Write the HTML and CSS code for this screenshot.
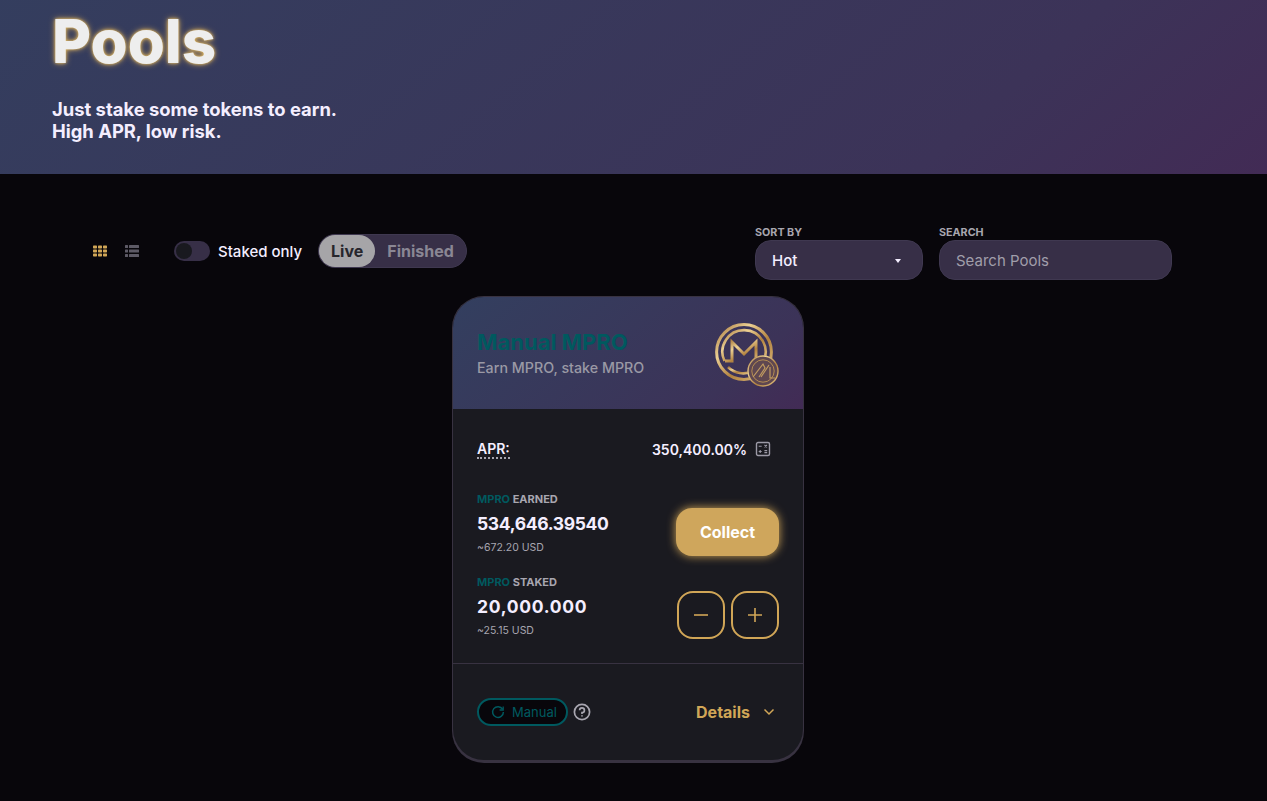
FILE: index.html
```html
<!DOCTYPE html>
<html lang="en">
<head>
<meta charset="utf-8">
<title>Pools</title>
<link rel="stylesheet" href="styles.css">
</head>
<body>
<header class="hero">
  <h1 class="hero-title">Pools</h1>
  <p class="hero-sub">Just stake some tokens to earn.<br>High APR, low risk.</p>
</header>
<main class="page">
  <div class="toolbar">
    <div class="view-icons">
      <svg class="view-icon" width="16" height="16" viewBox="0 0 16 16" fill="#d1a657"><rect x="1" y="2.5" width="4" height="3" rx=".7"/><rect x="6" y="2.5" width="4" height="3" rx=".7"/><rect x="11" y="2.5" width="4" height="3" rx=".7"/><rect x="1" y="6.5" width="4" height="3" rx=".7"/><rect x="6" y="6.5" width="4" height="3" rx=".7"/><rect x="11" y="6.5" width="4" height="3" rx=".7"/><rect x="1" y="10.5" width="4" height="3" rx=".7"/><rect x="6" y="10.5" width="4" height="3" rx=".7"/><rect x="11" y="10.5" width="4" height="3" rx=".7"/></svg>
      <svg class="view-icon" width="16" height="16" viewBox="0 0 16 16" fill="#5d5a66"><rect x="1" y="2" width="3" height="3" rx=".5"/><rect x="5" y="2" width="10" height="3" rx=".5"/><rect x="1" y="6.5" width="3" height="3" rx=".5"/><rect x="5" y="6.5" width="10" height="3" rx=".5"/><rect x="1" y="11" width="3" height="3" rx=".5"/><rect x="5" y="11" width="10" height="3" rx=".5"/></svg>
    </div>
    <div class="toggle"><span class="knob"></span></div>
    <span class="toggle-label">Staked only</span>
    <div class="tabs">
      <span class="tab tab-active">Live</span>
      <span class="tab tab-idle">Finished</span>
    </div>
    <div class="filters">
      <div class="filter">
        <span class="filter-label">SORT BY</span>
        <div class="select"><span>Hot</span><span class="caret"></span></div>
      </div>
      <div class="filter">
        <span class="filter-label">SEARCH</span>
        <div class="search">Search Pools</div>
      </div>
    </div>
  </div>

  <section class="cards">
    <article class="card">
      <div class="card-inner">
        <div class="card-head">
          <div class="card-heading">
            <h2 class="card-title">Manual MPRO</h2>
            <p class="card-sub">Earn MPRO, stake MPRO</p>
          </div>
          <svg class="coin" width="64" height="64" viewBox="0 0 64 64" fill="none">
            <defs>
              <linearGradient id="gold" x1="0" y1="0" x2="1" y2="1">
                <stop offset="0" stop-color="#a3743a"/>
                <stop offset=".3" stop-color="#ecd093"/>
                <stop offset=".6" stop-color="#b1813f"/>
                <stop offset="1" stop-color="#e8c889"/>
              </linearGradient>
            </defs>
            <circle cx="29" cy="29" r="27.4" stroke="url(#gold)" stroke-width="3"/>
            <path d="M9.5 38 A21.6 21.6 0 1 1 48 39" stroke="url(#gold)" stroke-width="2.6"/>
            <path d="M10 38H17V19L29 31L41 19V38H47" stroke="url(#gold)" stroke-width="3"/>
            <path d="M13 44 A21.6 21.6 0 0 0 38 48" stroke="url(#gold)" stroke-width="2.6"/>
            <circle cx="48" cy="48" r="15.4" fill="#5f4750"/>
            <circle cx="48" cy="48" r="15" stroke="url(#gold)" stroke-width="1.4"/>
            <circle cx="48" cy="48" r="11.2" stroke="#b48c52" stroke-width="1"/>
            <path d="M38 54L48 41L50 45L44 54M46 54L54 42M55 44V55H60" stroke="#c29c60" stroke-width="1.2"/>
          </svg>
        </div>
        <div class="card-body">
          <div class="apr-row">
            <span class="apr-label">APR:</span>
            <span class="apr-value">350,400.00%
              <svg width="16" height="16" viewBox="0 0 16 16" fill="none" stroke="#9c9aa6"><rect x="1.5" y="1.5" width="13" height="13" rx="1.5" stroke-width="1.4"/><path d="M3.7 5.2h3M9.5 4l2.4 2.4M11.9 4L9.5 6.4M3.7 10.5h3M5.2 9v3M9.4 9.6h2.8M9.4 11.6h2.8" stroke-width="1.1"/></svg>
            </span>
          </div>
          <div class="stat-row">
            <div class="stat-info">
              <div class="stat-label"><span class="accent">MPRO</span> EARNED</div>
              <div class="stat-value">534,646.39540</div>
              <div class="stat-usd">~672.20 USD</div>
            </div>
            <button class="collect">Collect</button>
          </div>
          <div class="stat-row">
            <div class="stat-info">
              <div class="stat-label"><span class="accent">MPRO</span> STAKED</div>
              <div class="stat-value stat-value-wide">20,000.000</div>
              <div class="stat-usd">~25.15 USD</div>
            </div>
            <div class="stake-btns">
              <button class="square"><svg width="18" height="18" viewBox="0 0 18 18" stroke="#d1a657" stroke-width="1.6"><path d="M2 9h14"/></svg></button>
              <button class="square"><svg width="18" height="18" viewBox="0 0 18 18" stroke="#d1a657" stroke-width="1.6"><path d="M2 9h14M9 2v14"/></svg></button>
            </div>
          </div>
        </div>
        <div class="card-foot">
          <div class="foot-left">
            <span class="tag">
              <svg width="14" height="14" viewBox="0 0 14 14" fill="none" stroke="#00595f" stroke-width="1.5"><path d="M11.6 4.2A5.4 5.4 0 1 0 12.4 7"/><path d="M12.2 1.4v3.6H8.6" stroke-width="1.3"/></svg>
              Manual
            </span>
            <svg width="18" height="18" viewBox="0 0 18 18" fill="none" stroke="#a8a6b0" stroke-width="1.7"><circle cx="9" cy="9" r="7.6"/><path d="M6.6 7.2A2.4 2.4 0 1 1 9 9.6v1.4"/><path d="M9 12.2v1.4"/></svg>
          </div>
          <div class="details">
            <span>Details</span>
            <svg width="12" height="8" viewBox="0 0 12 8" fill="none" stroke="#d1a657" stroke-width="1.5"><path d="M1.5 1.5L6 6l4.5-4.5"/></svg>
          </div>
        </div>
      </div>
    </article>
  </section>
</main>
</body>
</html>
```
FILE: styles.css
```css
* { box-sizing: border-box; }
html, body { margin: 0; height: 100%; }
body {
  background: #08060b;
  color: #f4eeff;
  font-family: Inter, "Noto Sans", sans-serif;
  overflow: hidden;
}
.hero {
  height: 174px;
  padding: 0 0 0 52px;
  background: linear-gradient(139deg, #333f5f 0%, #3c3358 78%, #422b55 100%) bottom / 100% 300px no-repeat;
}
.hero-title {
  margin: 0;
  height: 98px;
  font-size: 60px;
  line-height: 82px;
  font-weight: 800;
  color: #eeeeee;
  text-shadow: 0 0 3px #e8c069, 0 0 6px #d1a657;
}
.hero-sub {
  margin: 0;
  font-size: 18.4px;
  line-height: 22px;
  font-weight: 700;
}
.page { padding: 0 95px 0 92px; }
.toolbar {
  display: flex;
  align-items: center;
  height: 122px;
  padding-top: 32px;
}
.view-icons { display: flex; gap: 16px; width: 82px; }
.toggle {
  width: 36px;
  height: 20px;
  border-radius: 10px;
  background: #372f47;
  padding: 2px;
}
.knob {
  display: block;
  width: 16px;
  height: 16px;
  border-radius: 50%;
  background: #19191f;
}
.toggle-label { margin-left: 8px; font-size: 15px; font-weight: 500; }
.tabs {
  display: flex;
  margin-left: 16px;
  height: 34px;
  border-radius: 17px;
  border: 1px solid #3f3850;
  background: #372f47;
  font-size: 16px;
  font-weight: 700;
}
.tab { display: flex; align-items: center; }
.tab-active { width: 56px; justify-content: center; background: #a6a5a8; color: #27262c; border-radius: 17px; }
.tab-idle { width: 91px; justify-content: center; color: #8a8794; }
.filters { display: flex; gap: 16px; margin-left: auto; }
.filter { display: flex; flex-direction: column; }
.filter-label {
  font-size: 10.75px;
  line-height: 15px;
  padding-top: 2px;
  font-weight: 700;
  color: #a8a6b0;
}
.select, .search {
  height: 40px;
  border-radius: 16px;
  background: #372f47;
  border: 1px solid #3f3850;
  display: flex;
  align-items: center;
  font-size: 15px;
  padding: 2px 16px 0;
}
.select { width: 168px; justify-content: space-between; font-weight: 500; }
.search { width: 233px; color: #a09eaa; }
.caret {
  width: 0;
  height: 0;
  border-left: 3.5px solid transparent;
  border-right: 3.5px solid transparent;
  border-top: 4px solid #f4eeff;
  margin-right: 5px;
}
.cards { display: flex; justify-content: center; margin: 0 -95px 0 -92px; padding-right: 11px; }
.card {
  width: 352px;
  height: 467px;
  border-radius: 32px;
  background: #383241;
  padding: 1px 1px 3px;
}
.card-inner {
  height: 100%;
  border-radius: 31px;
  overflow: hidden;
  background: #1a1a20;
  display: flex;
  flex-direction: column;
}
.card-head {
  height: 112px;
  padding: 0 24px;
  display: flex;
  align-items: center;
  justify-content: space-between;
  background: linear-gradient(139deg, #333f5f 0%, #3c3358 78%, #422b55 100%);
}
.card-heading { margin-top: -1px; }
.card-title {
  margin: 0;
  font-size: 22px;
  line-height: 30px;
  font-weight: 700;
  color: #00595f;
}
.card-sub { margin: 0; font-size: 14.25px; line-height: 22px; color: #9a99a5; font-weight: 500; }
.coin { margin-top: 4px; }
.card-body {
  height: 255px;
  padding: 0 24px;
  border-bottom: 1px solid #383241;
}
.apr-row {
  display: flex;
  justify-content: space-between;
  align-items: center;
  height: 80px;
  font-size: 14px;
  font-weight: 600;
}
.apr-label { border-bottom: 2px dotted #a8a6b0; padding-top: 2px; line-height: 16px; }
.apr-value { display: flex; align-items: center; gap: 8px; padding-right: 8px; }
.stat-row {
  display: flex;
  justify-content: space-between;
  align-items: flex-start;
  height: 83px;
}
.stat-info { padding-top: 1px; }
.stat-label { font-size: 11px; line-height: 17px; margin-top: 1px; font-weight: 700; color: #a8a6b0; }
.accent { color: #00595f; }
.stat-value { font-size: 17.5px; line-height: 32px; font-weight: 700; letter-spacing: -.35px; }
.stat-value-wide { letter-spacing: .7px; }
.stat-usd { font-size: 10.5px; line-height: 16px; color: #a8a6b0; }
.collect {
  width: 103px;
  height: 48px;
  margin-top: 19px;
  border: 0;
  border-radius: 16px;
  background: #cfa65c;
  color: #fff;
  font: 700 16px Inter, "Noto Sans", sans-serif;
  box-shadow: 0 0 10px #d1a657;
}
.stake-btns { display: flex; gap: 6px; margin-top: 19px; }
.square {
  width: 48px;
  height: 48px;
  border: 2px solid #d1a657;
  border-radius: 16px;
  background: transparent;
  display: flex;
  align-items: center;
  justify-content: center;
  padding: 0;
}
.card-foot {
  flex: 1;
  padding: 0 28px 0 24px;
  display: flex;
  align-items: center;
  justify-content: space-between;
}
.foot-left { display: flex; align-items: center; gap: 5px; }
.tag {
  display: flex;
  align-items: center;
  gap: 7px;
  height: 28px;
  width: 91px;
  padding-left: 12px;
  border: 2px solid #00595f;
  border-radius: 14px;
  background: #08060b;
  color: #00595f;
  font-size: 13px;
}
.details { display: flex; align-items: center; gap: 13px; color: #d1a657; font-size: 16px; font-weight: 700; }
```
